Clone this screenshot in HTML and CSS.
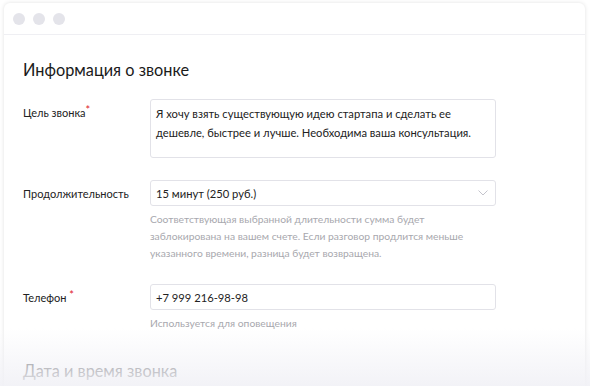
FILE: index.html
```html
<!DOCTYPE html>
<html lang="ru">
<head>
    <meta charset="UTF-8">
    <title>Информация о звонке</title>
    <link rel="stylesheet" href="styles.css">
</head>
<body>
    <div class="window">
        <!-- Window chrome -->
        <div class="titlebar">
            <span class="dot"></span>
            <span class="dot"></span>
            <span class="dot"></span>
        </div>

        <div class="content">
            <h2>Информация о звонке</h2>

            <div class="row">
                <label class="label">Цель звонка<span class="req">*</span></label>
                <div class="field">
                    <div class="textarea">Я хочу взять существующую идею стартапа и сделать ее дешевле, быстрее и лучше. Необходима ваша консультация.</div>
                </div>
            </div>

            <div class="row">
                <label class="label">Продолжительность</label>
                <div class="field">
                    <div class="input select">
                        <span>15 минут (250 руб.)</span>
                        <svg class="chevron" width="10" height="6" viewBox="0 0 10 6"><path d="M0.5 0.5 L5 5 L9.5 0.5" fill="none" stroke="#c4c4cc" stroke-width="1"/></svg>
                    </div>
                    <p class="hint">Соответствующая выбранной длительности сумма будет заблокирована на вашем счете. Если разговор продлится меньше указанного времени, разница будет возвращена.</p>
                </div>
            </div>

            <div class="row">
                <label class="label">Телефон <span class="req">*</span></label>
                <div class="field">
                    <div class="input">+7 999 216-98-98</div>
                    <p class="hint">Используется для оповещения</p>
                </div>
            </div>

            <h2 class="muted">Дата и время звонка</h2>
        </div>
    </div>
    <div class="fade"></div>
</body>
</html>
```

FILE: styles.css
```css
body {
    margin: 0;
    background-color: #ffffff;
    font-family: Lato, 'Open Sans', sans-serif;
    color: #222;
    height: 386px;
    overflow: hidden;
}

.window {
    margin: 3px 5px 0 4px;
    background-color: #ffffff;
    border-radius: 6px 6px 0 0;
    box-shadow: 0 0 4px rgba(0, 0, 0, 0.12);
    height: 420px;
}

.titlebar {
    display: flex;
    gap: 8px;
    align-items: center;
    height: 31px;
    padding-left: 9px;
    border-bottom: 1px solid #efeff3;
}

.dot {
    width: 12px;
    height: 12px;
    border-radius: 50%;
    background-color: #e4e4ea;
}

.content {
    padding: 0 19px;
}

h2 {
    margin: 25px 0 20px;
    font-size: 16.3px;
    font-weight: 400;
    color: #1a1a1a;
}

h2.muted {
    color: #6a6a6e;
    margin-top: 29px;
}

.row {
    display: flex;
    margin-bottom: 22px;
}

.label {
    width: 127px;
    flex-shrink: 0;
    font-size: 11px;
    padding-top: 7px;
    color: #222;
}

.req {
    color: #e0202a;
    vertical-align: 3px;
    font-size: 11px;
    line-height: 0;
}

.field {
    width: 346px;
}

.textarea, .input {
    border: 1px solid #e2e2e8;
    border-radius: 3px;
    font-size: 11.2px;
    color: #222;
}

.textarea {
    height: 47px;
    padding: 4px 5px 6px;
    line-height: 19px;
}

.input {
    height: 24px;
    padding: 0 5px;
    display: flex;
    align-items: center;
    justify-content: space-between;
}

.chevron {
    margin-right: 2px;
}

.hint {
    margin: 5px 0 0;
    font-size: 10.3px;
    line-height: 17px;
    color: #a8a8ae;
}

.fade {
    position: absolute;
    left: 0;
    right: 0;
    bottom: 0;
    height: 58px;
    background: linear-gradient(rgba(243, 243, 248, 0), rgba(241, 241, 246, 0.9));
}
```
